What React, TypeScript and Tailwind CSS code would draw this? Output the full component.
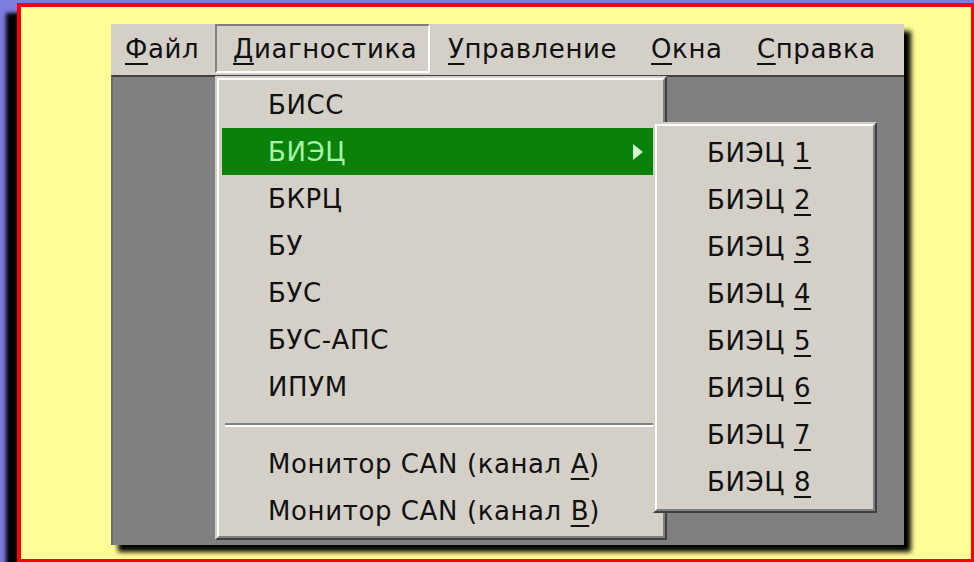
import React from "react";

const diagItems = ["БИСС", "БИЭЦ", "БКРЦ", "БУ", "БУС", "БУС-АПС", "ИПУМ"];
const bietsItems = ["1", "2", "3", "4", "5", "6", "7", "8"];

function U({ children }: { children: React.ReactNode }) {
  return <span className="underline decoration-2 underline-offset-[5px]">{children}</span>;
}

// Classic Windows raised 3D frame used by popup menus
function Raised({ className, children }: { className: string; children: React.ReactNode }) {
  return (
    <div
      className={
        "absolute border-2 border-t-[#d4d0c8] border-l-[#d4d0c8] border-r-[#404040] border-b-[#404040] bg-[#d4d0c8] " +
        className
      }
    >
      <div className="w-full h-full border-2 border-t-white border-l-white border-r-[#808080] border-b-[#808080]">
        {children}
      </div>
    </div>
  );
}

export default function App() {
  return (
    <div className="w-[974px] h-[562px] overflow-hidden bg-[#7d7de0] pl-[17px] pt-[3px] font-['DejaVu_Sans',sans-serif] text-[26px] tracking-[0.6px] leading-none text-[#111]">
      <div className="w-[957px] h-[559px] border-t-4 border-l-4 border-r-[3px] border-b-[3px] border-[#ff0000] bg-[#ffff99] shadow-[-11px_10px_4px_#000] pl-[90px] pt-[17px]">
        <div className="relative w-[793px] h-[521px] flex flex-col shadow-[7px_7px_5px_#000]">
          {/* menu bar */}
          <div className="h-[51px] bg-[#d4d0c8] flex items-start">
            <div className="w-[104px] h-[49px] pl-[14px] flex items-center">
              <span>
                <U>Ф</U>айл
              </span>
            </div>
            <div className="w-[215px] h-[49px] pl-[16px] flex items-center border-2 border-t-[#808080] border-l-[#808080] border-r-white border-b-white">
              <span>
                <U>Д</U>иагностика
              </span>
            </div>
            <div className="w-[203px] h-[49px] pl-[18px] flex items-center">
              <span>
                <U>У</U>правление
              </span>
            </div>
            <div className="w-[106px] h-[49px] pl-[18px] flex items-center">
              <span>
                <U>О</U>кна
              </span>
            </div>
            <div className="h-[49px] pl-[18px] flex items-center">
              <span>
                <U>С</U>правка
              </span>
            </div>
          </div>

          {/* MDI client area */}
          <div className="flex-1 bg-[#808080] border-t-2 border-t-[#404040] border-l-2 border-l-[#6b6b6b]" />

          {/* Диагностика dropdown */}
          <Raised className="left-[104px] top-[52px] w-[452px] h-[464px]">
            <div className="px-[3px] py-[1px] flex flex-col">
              {diagItems.map((t) =>
                t === "БИЭЦ" ? (
                  <div key={t} className="h-[47px] flex items-center justify-between pl-[46px] pr-[17px] bg-[#0a820a] text-[#a8f4a8]">
                    <span>{t}</span>
                    <svg width="10" height="16" viewBox="0 0 10 16">
                      <polygon points="0,0 10,8 0,16" fill="#d2fbd2" />
                    </svg>
                  </div>
                ) : (
                  <div key={t} className="h-[47px] flex items-center pl-[46px]">
                    {t}
                  </div>
                )
              )}
              <div className="h-[30px] flex items-center px-[3px]">
                <div className="w-full border-t-2 border-t-[#808080] border-b-2 border-b-white" />
              </div>
              <div className="h-[47px] flex items-center pl-[46px]">
                <span>
                  Монитор CAN (канал <U>А</U>)
                </span>
              </div>
              <div className="h-[47px] flex items-center pl-[46px]">
                <span>
                  Монитор CAN (канал <U>В</U>)
                </span>
              </div>
            </div>
          </Raised>

          {/* БИЭЦ submenu */}
          <Raised className="left-[542px] top-[98px] w-[224px] h-[391px]">
            <div className="px-[3px] py-[3px] flex flex-col">
              {bietsItems.map((n) => (
                <div key={n} className="h-[47px] flex items-center pl-[47px]">
                  <span>
                    БИЭЦ <U>{n}</U>
                  </span>
                </div>
              ))}
            </div>
          </Raised>
        </div>
      </div>
    </div>
  );
}
